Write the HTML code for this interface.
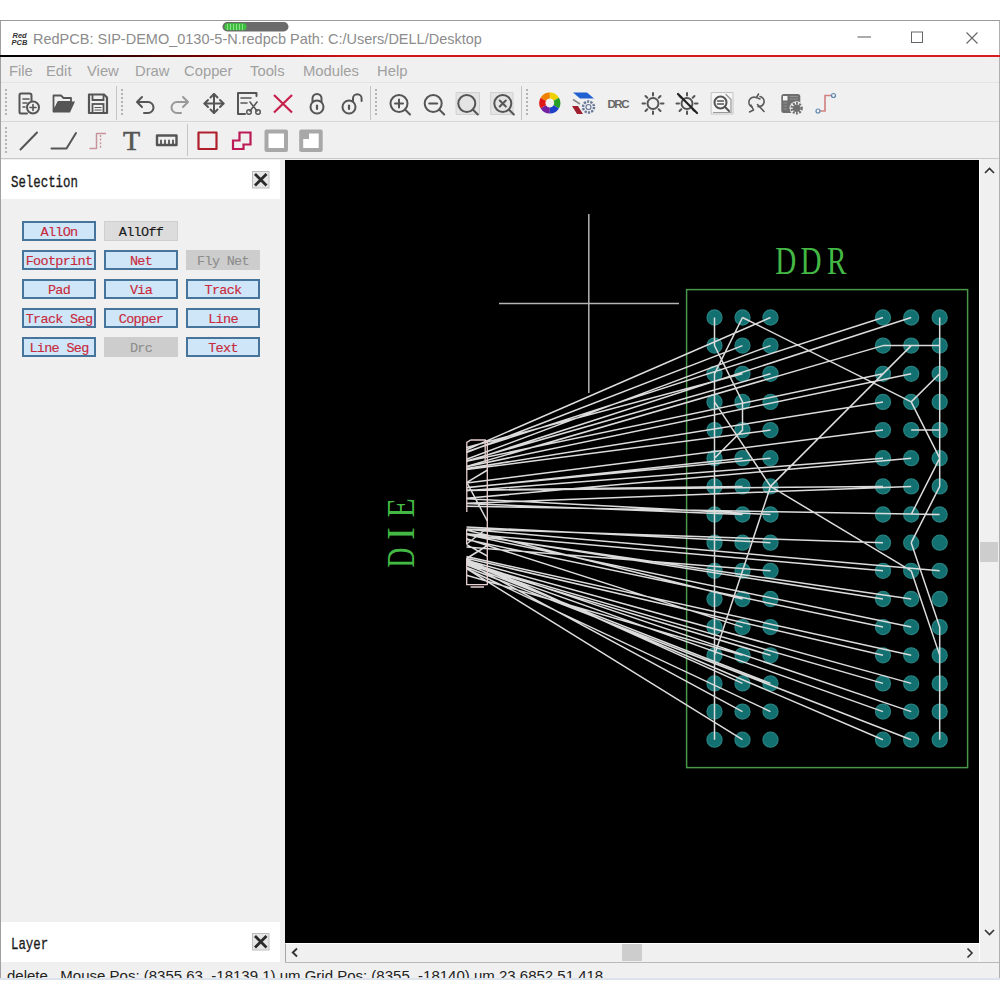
<!DOCTYPE html>
<html><head><meta charset="utf-8">
<style>
*{margin:0;padding:0;box-sizing:border-box}
html,body{width:1000px;height:1000px;overflow:hidden;background:#fff;font-family:"Liberation Sans",sans-serif}
div{position:absolute}
#win{left:0;top:20px;width:1000px;height:959px;background:#f0f0f0;border-top:1px solid #9a9a9a;border-left:1px solid #a0a0a0;border-right:1px solid #b0b0b0}
#title{left:1px;top:21px;width:998px;height:34px;background:#fff}
#redline{left:0;top:55px;width:1000px;height:2px;background:linear-gradient(90deg,#000 0%,#200 10%,#900 25%,#d0141c 35%,#d81c24 100%)}
.ttxt{left:33px;top:30.5px;font-size:14.5px;color:#8c8c8c;white-space:nowrap}
.mi{top:63px;font-size:14.8px;color:#a0a0a0}
.hl{height:1px;background:#dcdcdc}
.sep{width:1px;background:#c4c4c4}
.grip{width:2px;background-image:linear-gradient(#b4b4b4 50%,transparent 50%);background-size:2px 4px}
.btn{height:20px;width:74px;border:2px solid #46749a;background:#cfe6f9;color:#c82a3c;font-family:"Liberation Mono",monospace;-webkit-text-stroke:0.15px;font-size:13.5px;text-align:center;line-height:19px;letter-spacing:-0.7px;white-space:nowrap}
.btn.g{border:1px solid #cfcfcf;background:#dcdcdc;color:#1a1a1a;line-height:21px}
.btn.d{border:1px solid #cdcdcd;background:#cdcdcd;color:#8e8e8e;line-height:21px}
#canvas{left:285px;top:160px;width:694px;height:783px;background:#000}
svg{position:absolute;overflow:visible}
.ic{stroke:#555;fill:none;stroke-width:2}
</style></head><body>
<div id="win"></div>
<div id="title"></div>
<div id="redline"></div>
<div class="ttxt">RedPCB: SIP-DEMO_0130-5-N.redpcb Path: C:/Users/DELL/Desktop</div>
<div class="mi" style="left:9px">File</div>
<div class="mi" style="left:46px">Edit</div>
<div class="mi" style="left:87px">View</div>
<div class="mi" style="left:135px">Draw</div>
<div class="mi" style="left:184px">Copper</div>
<div class="mi" style="left:250px">Tools</div>
<div class="mi" style="left:303px">Modules</div>
<div class="mi" style="left:377px">Help</div>
<div class="hl" style="left:1px;top:82px;width:998px;background:#e4e4e4"></div>
<div class="hl" style="left:1px;top:121px;width:998px;background:#d8d8d8"></div>
<div class="hl" style="left:1px;top:158px;width:998px;background:#c8c8c8"></div>
<div class="grip" style="left:5px;top:89px;height:28px"></div>
<div class="sep" style="left:116px;top:86px;height:34px"></div>
<div class="grip" style="left:121px;top:89px;height:28px"></div>
<div class="sep" style="left:370px;top:86px;height:34px"></div>
<div class="grip" style="left:375px;top:89px;height:28px"></div>
<div class="sep" style="left:521px;top:86px;height:34px"></div>
<div class="grip" style="left:526px;top:89px;height:28px"></div>
<div class="grip" style="left:5px;top:127px;height:28px"></div>
<div class="sep" style="left:187px;top:124px;height:32px"></div>

<!-- PANEL -->
<div style="left:1px;top:160px;width:279px;height:39px;background:#fff"></div>
<div style="left:11px;top:174px;font-family:'Liberation Mono',monospace;font-size:12.4px;letter-spacing:0px;color:#1a1a1a;-webkit-text-stroke:0.25px;transform:scaleY(1.3);transform-origin:0 0">Selection</div>
<div style="left:1px;top:922px;width:279px;height:40px;background:#fff"></div>
<div style="left:11px;top:936px;font-family:'Liberation Mono',monospace;font-size:12.4px;letter-spacing:0px;color:#1a1a1a;-webkit-text-stroke:0.25px;transform:scaleY(1.3);transform-origin:0 0">Layer</div>

<div class="btn" style="left:22px;top:221px">AllOn</div>
<div class="btn g" style="left:104px;top:221px">AllOff</div>
<div class="btn" style="left:22px;top:250px">Footprint</div>
<div class="btn" style="left:104px;top:250px">Net</div>
<div class="btn d" style="left:186px;top:250px">Fly Net</div>
<div class="btn" style="left:22px;top:279px">Pad</div>
<div class="btn" style="left:104px;top:279px">Via</div>
<div class="btn" style="left:186px;top:279px">Track</div>
<div class="btn" style="left:22px;top:308px">Track Seg</div>
<div class="btn" style="left:104px;top:308px">Copper</div>
<div class="btn" style="left:186px;top:308px">Line</div>
<div class="btn" style="left:22px;top:337px">Line Seg</div>
<div class="btn d" style="left:104px;top:337px">Drc</div>
<div class="btn" style="left:186px;top:337px">Text</div>

<div id="canvas">
<svg width="694" height="783" viewBox="285 160 694 783" style="left:0;top:0">
<g stroke="#b4b4b4" stroke-width="1.5"><line x1="588.8" y1="214" x2="588.8" y2="393"/><line x1="499" y1="303.6" x2="679" y2="303.6"/></g>
<rect x="686.6" y="289.6" width="281" height="478" fill="none" stroke="#4a964a" stroke-width="1.5"/>
<g fill="#137070" stroke="#267f7e" stroke-width="1.3"><circle cx="714.5" cy="317.5" r="7.5"/><circle cx="742.5" cy="317.5" r="7.5"/><circle cx="770.5" cy="317.5" r="7.5"/><circle cx="883.0" cy="317.5" r="7.5"/><circle cx="911.2" cy="317.5" r="7.5"/><circle cx="939.7" cy="317.5" r="7.5"/><circle cx="714.5" cy="345.6" r="7.5"/><circle cx="742.5" cy="345.6" r="7.5"/><circle cx="770.5" cy="345.6" r="7.5"/><circle cx="883.0" cy="345.6" r="7.5"/><circle cx="911.2" cy="345.6" r="7.5"/><circle cx="939.7" cy="345.6" r="7.5"/><circle cx="714.5" cy="373.8" r="7.5"/><circle cx="742.5" cy="373.8" r="7.5"/><circle cx="770.5" cy="373.8" r="7.5"/><circle cx="883.0" cy="373.8" r="7.5"/><circle cx="911.2" cy="373.8" r="7.5"/><circle cx="939.7" cy="373.8" r="7.5"/><circle cx="714.5" cy="401.9" r="7.5"/><circle cx="742.5" cy="401.9" r="7.5"/><circle cx="770.5" cy="401.9" r="7.5"/><circle cx="883.0" cy="401.9" r="7.5"/><circle cx="911.2" cy="401.9" r="7.5"/><circle cx="939.7" cy="401.9" r="7.5"/><circle cx="714.5" cy="430.1" r="7.5"/><circle cx="742.5" cy="430.1" r="7.5"/><circle cx="770.5" cy="430.1" r="7.5"/><circle cx="883.0" cy="430.1" r="7.5"/><circle cx="911.2" cy="430.1" r="7.5"/><circle cx="939.7" cy="430.1" r="7.5"/><circle cx="714.5" cy="458.2" r="7.5"/><circle cx="742.5" cy="458.2" r="7.5"/><circle cx="770.5" cy="458.2" r="7.5"/><circle cx="883.0" cy="458.2" r="7.5"/><circle cx="911.2" cy="458.2" r="7.5"/><circle cx="939.7" cy="458.2" r="7.5"/><circle cx="714.5" cy="486.4" r="7.5"/><circle cx="742.5" cy="486.4" r="7.5"/><circle cx="770.5" cy="486.4" r="7.5"/><circle cx="883.0" cy="486.4" r="7.5"/><circle cx="911.2" cy="486.4" r="7.5"/><circle cx="939.7" cy="486.4" r="7.5"/><circle cx="714.5" cy="514.5" r="7.5"/><circle cx="742.5" cy="514.5" r="7.5"/><circle cx="770.5" cy="514.5" r="7.5"/><circle cx="883.0" cy="514.5" r="7.5"/><circle cx="911.2" cy="514.5" r="7.5"/><circle cx="939.7" cy="514.5" r="7.5"/><circle cx="714.5" cy="542.7" r="7.5"/><circle cx="742.5" cy="542.7" r="7.5"/><circle cx="770.5" cy="542.7" r="7.5"/><circle cx="883.0" cy="542.7" r="7.5"/><circle cx="911.2" cy="542.7" r="7.5"/><circle cx="939.7" cy="542.7" r="7.5"/><circle cx="714.5" cy="570.8" r="7.5"/><circle cx="742.5" cy="570.8" r="7.5"/><circle cx="770.5" cy="570.8" r="7.5"/><circle cx="883.0" cy="570.8" r="7.5"/><circle cx="911.2" cy="570.8" r="7.5"/><circle cx="939.7" cy="570.8" r="7.5"/><circle cx="714.5" cy="599.0" r="7.5"/><circle cx="742.5" cy="599.0" r="7.5"/><circle cx="770.5" cy="599.0" r="7.5"/><circle cx="883.0" cy="599.0" r="7.5"/><circle cx="911.2" cy="599.0" r="7.5"/><circle cx="939.7" cy="599.0" r="7.5"/><circle cx="714.5" cy="627.1" r="7.5"/><circle cx="742.5" cy="627.1" r="7.5"/><circle cx="770.5" cy="627.1" r="7.5"/><circle cx="883.0" cy="627.1" r="7.5"/><circle cx="911.2" cy="627.1" r="7.5"/><circle cx="939.7" cy="627.1" r="7.5"/><circle cx="714.5" cy="655.3" r="7.5"/><circle cx="742.5" cy="655.3" r="7.5"/><circle cx="770.5" cy="655.3" r="7.5"/><circle cx="883.0" cy="655.3" r="7.5"/><circle cx="911.2" cy="655.3" r="7.5"/><circle cx="939.7" cy="655.3" r="7.5"/><circle cx="714.5" cy="683.4" r="7.5"/><circle cx="742.5" cy="683.4" r="7.5"/><circle cx="770.5" cy="683.4" r="7.5"/><circle cx="883.0" cy="683.4" r="7.5"/><circle cx="911.2" cy="683.4" r="7.5"/><circle cx="939.7" cy="683.4" r="7.5"/><circle cx="714.5" cy="711.6" r="7.5"/><circle cx="742.5" cy="711.6" r="7.5"/><circle cx="770.5" cy="711.6" r="7.5"/><circle cx="883.0" cy="711.6" r="7.5"/><circle cx="911.2" cy="711.6" r="7.5"/><circle cx="939.7" cy="711.6" r="7.5"/><circle cx="714.5" cy="739.7" r="7.5"/><circle cx="742.5" cy="739.7" r="7.5"/><circle cx="770.5" cy="739.7" r="7.5"/><circle cx="883.0" cy="739.7" r="7.5"/><circle cx="911.2" cy="739.7" r="7.5"/><circle cx="939.7" cy="739.7" r="7.5"/></g>
<g fill="#44b844" font-family="Liberation Serif" font-size="40.5">
<text text-anchor="middle" transform="translate(785.8,274) scale(0.72,1)" x="0" y="0">D</text>
<text text-anchor="middle" transform="translate(810.9,274) scale(0.72,1)" x="0" y="0">D</text>
<text text-anchor="middle" transform="translate(836.8,274) scale(0.72,1)" x="0" y="0">R</text>
</g>
<g fill="#44b844" font-family="Liberation Serif" font-size="40.5" transform="translate(414,567) rotate(-90)">
<text text-anchor="middle" transform="translate(9.5,0) scale(0.68,1)">D</text>
<text text-anchor="middle" transform="translate(33.5,0) scale(0.95,1)">I</text>
<text text-anchor="middle" transform="translate(59.1,0) scale(0.78,1)">E</text>
</g>
<path fill="none" stroke="#dcdcdc" stroke-width="1.5" d="M466.5 451.6L883.0 317.5M466.5 461.6L911.2 317.5M466.5 466.4L883.0 345.6M466.5 466.7L911.2 373.8M466.5 461.3L883.0 373.8M466.5 468.6L883.0 401.9M466.5 483.0L883.0 430.1M466.5 490.7L883.0 458.2M466.5 498.3L911.2 458.2M466.5 490.5L883.0 486.4M466.5 503.3L911.2 486.4M466.5 506.2L939.7 514.5M466.5 528.9L883.0 542.7M466.5 533.8L883.0 570.8M466.5 529.2L939.7 570.8M466.5 534.0L883.0 599.0M466.5 534.5L911.2 599.0M466.5 539.6L883.0 627.1M466.5 534.6L911.2 627.1M466.5 558.2L883.0 655.3M466.5 556.5L911.2 655.3M466.5 563.0L883.0 683.4M466.5 560.2L911.2 683.4M466.5 563.3L883.0 711.6M466.5 561.2L911.2 711.6M466.5 561.9L883.0 739.7M466.5 567.2L911.2 739.7M466.5 449.7L770.5 317.5M466.5 452.5L742.5 345.6M466.5 459.3L770.5 345.6M466.5 461.0L770.5 373.8M466.5 447.5L742.5 373.8M466.5 469.6L770.5 430.1M466.5 487.8L742.5 458.2M466.5 487.4L770.5 458.2M466.5 490.0L742.5 486.4M466.5 503.5L742.5 514.5M466.5 498.7L770.5 514.5M466.5 526.9L770.5 542.7M466.5 547.1L770.5 570.8M466.5 530.0L742.5 599.0M466.5 538.8L742.5 627.1M466.5 564.1L770.5 655.3M466.5 575.2L742.5 655.3M466.5 559.2L742.5 683.4M466.5 564.8L770.5 683.4M466.5 562.5L742.5 711.6M466.5 568.7L770.5 711.6M466.5 568.6L742.5 739.7M714.5 317.5L714.5 345.6L742.5 401.9L742.5 430.1L714.5 458.2M742.5 317.5L714.5 373.8L714.5 739.7M714.5 401.9L770.5 486.4M770.5 486.4L911.2 345.6M770.5 486.4L911.2 570.8M770.5 486.4L714.5 655.3M742.5 317.5L911.2 401.9M883.0 345.6L939.7 345.6M939.7 317.5L939.7 486.4M911.2 401.9L939.7 373.8M911.2 401.9L939.7 458.2M911.2 430.1L939.7 430.1M939.7 458.2L911.2 514.5M939.7 486.4L911.2 542.7M911.2 542.7L939.7 627.1L939.7 655.3M911.2 570.8L939.7 655.3L939.7 739.7M466.5 482.7L487.5 470M466.8 482.4L487.3 521M466.6 544.6L487.3 556M466.5 544L487.5 528M466.5 558.5L487.5 545.5"/>
<path fill="none" stroke="#e8d0d0" stroke-width="1.3" d="M466.8 512V442.4L470.8 440H485.2L487.3 442V584.7H466.7V558.3 M466.7 528.9V544.6 M485.2 440V462 M470.6 587H484"/>
</svg>
</div>
<!-- scrollbars -->
<div style="left:979px;top:159px;width:20px;height:803px;background:#f0f0f0;border-left:1px solid #fff"></div>
<div style="left:980px;top:542px;width:18px;height:20px;background:#cdcdcd"></div>
<div style="left:285px;top:943px;width:694px;height:19px;background:#f0f0f0;border-left:1px solid #a8a8a8;border-top:1px solid #fff"></div>
<div style="left:622px;top:944px;width:20px;height:17px;background:#cdcdcd"></div>
<div class="hl" style="left:285px;top:962px;width:714px;background:#b8b8b8"></div>
<div style="left:7px;top:964px;width:990px;height:14px;overflow:hidden">
<div style="left:0;top:3px;font-size:15px;color:#222;white-space:nowrap">delete &nbsp; Mouse Pos: (8355.63, -18139.1) um Grid Pos: (8355, -18140) um 23.6852 51.418</div>
</div>
<div style="left:0;top:978px;width:1000px;height:2px;background:#dde3ea"></div>
<div style="left:0;top:980px;width:1000px;height:20px;background:#fff"></div>
<svg style="left:0;top:84px" width="1000" height="76" viewBox="0 84 1000 76">
<g fill="none" stroke="#555" stroke-width="2" stroke-linecap="round" stroke-linejoin="round">
 <!-- new doc -->
 <path d="M31.5 101V95.5Q31.5 93.5 29.5 93.5H21Q19.5 93.5 19.5 95V112Q19.5 113.5 21 113.5H27"/>
 <path d="M23 99H29M23 103H27M23 107H25" stroke-width="1.6"/>
 <circle cx="33" cy="107.5" r="6"/>
 <path d="M33 104.5V110.5M30 107.5H36" stroke-width="1.6"/>
 <!-- undo -->
 <path d="M138 102H148A5.5 5.5 0 0 1 148 113H144"/>
 <path d="M142 97L137 102L142 107"/>
 <!-- redo light -->
 <path d="M187 102H177A5.5 5.5 0 0 0 177 113H181" stroke="#999"/>
 <path d="M183 97L188 102L183 107" stroke="#999"/>
 <!-- move -->
 <path d="M214 94V113M204.5 103.5H223.5"/>
 <path d="M210.5 97.5L214 94L217.5 97.5M210.5 109.5L214 113L217.5 109.5M208 100L204.5 103.5L208 107M220 100L223.5 103.5L220 107"/>
 <!-- cut doc -->
 <path d="M256.5 96V93H238V114H245"/>
 <path d="M241 98H251M241 103H247" stroke-width="1.6"/>
 <path d="M250 102L257 111M257 102L250 111" stroke-width="1.6"/>
 <circle cx="249" cy="112" r="2.3" stroke-width="1.4"/><circle cx="258" cy="112" r="2.3" stroke-width="1.4"/>
 <!-- lock -->
 <circle cx="317" cy="107" r="6.5"/>
 <path d="M312.5 102V98.5A4.5 4.5 0 0 1 321.5 98.5V102"/>
 <path d="M317 105.5V109" stroke-width="2.2"/>
 <!-- unlock -->
 <circle cx="349" cy="107" r="6.5"/>
 <path d="M353 101V98.5A4.3 4.3 0 0 1 361.6 98.5V101"/>
 <path d="M349 105.5V109" stroke-width="2.2"/>
 <!-- zoom in -->
 <circle cx="399" cy="103.5" r="8.5"/><path d="M405 109.5L410 114.5M395 103.5H403M399 99.5V107.5"/>
 <circle cx="433.2" cy="103.5" r="8.5"/><path d="M439.2 109.5L444.2 114.5M429.2 103.5H437.2"/>
 <rect x="456.5" y="92.5" width="23" height="22" fill="#e4e4e4" stroke="#d0d0d0" stroke-width="1"/>
 <circle cx="466.8" cy="103.5" r="8.5"/><path d="M472.8 109.5L477.8 114.5"/>
 <rect x="491" y="92.5" width="22" height="22" fill="#e4e4e4" stroke="#d0d0d0" stroke-width="1"/>
 <circle cx="502.8" cy="103.5" r="8.5"/><path d="M508.8 109.5L513.8 114.5M499.8 100.5L505.8 106.5M505.8 100.5L499.8 106.5"/>
 <!-- sun -->
 <circle cx="653" cy="103.5" r="5.5"/>
 <path d="M653 93V95.5M653 111.5V114M642.5 103.5H645M661 103.5H663.5M645.5 96L647.3 97.8M658.7 109.2L660.5 111M645.5 111L647.3 109.2M658.7 97.8L660.5 96"/>
 <!-- sun off -->
 <circle cx="687" cy="103.5" r="5.5"/>
 <path d="M687 93V95.5M687 111.5V114M676.5 103.5H679M695 103.5H697.5M679.5 96L681.3 97.8M692.7 109.2L694.5 111M679.5 111L681.3 109.2M692.7 97.8L694.5 96"/>
 <path d="M678 94L697 113" stroke="#222" stroke-width="2.2"/>
 <!-- doc search -->
 <rect x="711.5" y="92.5" width="21.5" height="21.5" fill="#f6f6f6" stroke="#c4c4c4" stroke-width="1"/>
 <path d="M726 94.5L731 99.5V112.5H713.5" stroke="#999" stroke-width="1.2"/>
 <circle cx="720.5" cy="102.5" r="6"/><path d="M724.8 106.8L729 111"/>
 <path d="M717.5 101H723.5M717.5 104H723.5" stroke-width="1.4"/>
 <!-- swap -->
 <g stroke="#5a5a5a" stroke-width="1.6">
 <path d="M756 97.5A4.8 4.8 0 1 0 752 107"/>
 <path d="M758 106.5A4.8 4.8 0 1 0 760 96.5"/>
 <path d="M758.5 94L756.5 97.5L760 99"/>
 <path d="M751 105L753.5 110L749.5 112"/>
 <path d="M757.5 104.5L764 111.5"/>
 </g>
 <!-- line icons row 2 -->
 <path d="M20.5 149.5L37 132.5"/>
 <path d="M51.5 148.5H66.5L76 133"/>
 <path d="M89.5 148.5H96.5V133.5H106" stroke="#c8949c" stroke-width="1.5" stroke-linecap="butt"/>
 <path d="M100.5 135V148.5" stroke="#c8949c" stroke-width="1.4" stroke-dasharray="2 1.6" stroke-linecap="butt"/>
 <rect x="157" y="135.5" width="19.5" height="9.5" stroke-width="2.4"/>
 <path d="M161 140.5V145M165 140.5V145M169 140.5V145M173 140.5V145" stroke-width="1.8"/>
 <rect x="198.5" y="132.5" width="18" height="16.5" stroke="#b0202c" stroke-width="2.2"/>
 <path d="M233 140.5H239.5V132.5H250.5V144.5H243.5V149H233Z" stroke="#bc1a56" stroke-width="2.2" stroke-linejoin="miter"/>
 <rect x="266.5" y="131.5" width="19.5" height="18.5" fill="#fff" stroke="#a8a8a8" stroke-width="4"/>
 <rect x="301.2" y="131.5" width="19.5" height="18.5" fill="#fff" stroke="#a8a8a8" stroke-width="4"/>
 <rect x="303" y="133" width="6" height="6" fill="#a8a8a8" stroke="none"/>
</g>
<!-- folder -->
<path d="M53.5 95.5H61L63.5 98H71V102H58.5L53.5 111.5Z" fill="none" stroke="#555" stroke-width="1.8" stroke-linejoin="round"/>
<path d="M57.5 101.5H75L70 112.5H53.5Z" fill="#555"/>
<!-- floppy -->
<path d="M89 94.5H104L107 97.5V113H89Z" fill="none" stroke="#555" stroke-width="2.2" stroke-linejoin="round"/>
<path d="M92.5 95V100H103.5V95" fill="none" stroke="#555" stroke-width="1.8"/>
<rect x="92.5" y="104" width="11" height="9" fill="none" stroke="#555" stroke-width="1.8"/>
<path d="M94.5 107.5H101.5M94.5 110H101.5" stroke="#555" stroke-width="1.2"/>
<!-- red X -->
<path d="M274 95L292 112.5M292 95L274 112.5" stroke="#c8204c" stroke-width="2.2"/>
<!-- color wheel -->
<g stroke-width="6.2" fill="none">
 <path d="M549.8 95.5A7.5 7.5 0 0 1 556.3 99.25" stroke="#f0d000"/>
 <path d="M556.3 99.25A7.5 7.5 0 0 1 556.3 106.75" stroke="#28a028"/>
 <path d="M556.3 106.75A7.5 7.5 0 0 1 549.8 110.5" stroke="#2040c8"/>
 <path d="M549.8 110.5A7.5 7.5 0 0 1 543.3 106.75" stroke="#7020a0"/>
 <path d="M543.3 106.75A7.5 7.5 0 0 1 543.3 99.25" stroke="#e01818"/>
 <path d="M543.3 99.25A7.5 7.5 0 0 1 549.8 95.5" stroke="#f08000"/>
</g>
<!-- layers icon -->
<path d="M573 92.5H587L594 98.5H580Z" fill="#2060d0"/>
<path d="M573 99.5L580 104" stroke="#888" stroke-width="1.5"/>
<path d="M572 106H578L583 114H577Z" fill="#a02030"/>
<circle cx="588.5" cy="107" r="5.5" fill="none" stroke="#6a7a9a" stroke-width="2.5" stroke-dasharray="2.2 1.2"/>
<circle cx="588.5" cy="107" r="2.5" fill="none" stroke="#6a7a9a" stroke-width="1.2"/>
<!-- DRC -->
<text x="607.5" y="108" font-family="Liberation Sans" font-weight="bold" font-size="11.5" fill="#666" textLength="22">DRC</text>
<!-- component gear -->
<rect x="781.3" y="94" width="19" height="19" rx="2.5" fill="#6e6e6e"/>
<rect x="783" y="96" width="4.5" height="4.5" fill="#f4f4f4"/>
<path d="M789.5 96.5H798M789.5 99H798M783.5 103H787M783.5 106H787M783.5 109H787" stroke="#9a9a9a" stroke-width="0.8"/>
<circle cx="796.6" cy="108.3" r="7" fill="#f0f0f0"/>
<circle cx="796.6" cy="108.3" r="3.8" fill="#6e6e6e"/>
<circle cx="796.6" cy="108.3" r="5" fill="none" stroke="#6e6e6e" stroke-width="2.4" stroke-dasharray="1.9 1.3"/>
<!-- route icon -->
<path d="M818 111H825V95.5H832" fill="none" stroke="#d08080" stroke-width="1.6"/>
<circle cx="818" cy="111" r="2" fill="#f0f0f0" stroke="#6088b0" stroke-width="1.2"/>
<circle cx="833.5" cy="95.5" r="2" fill="#f0f0f0" stroke="#6088b0" stroke-width="1.2"/>
<!-- T -->
<text x="123" y="150" font-family="Liberation Serif" font-size="28" fill="#555" stroke="#555" stroke-width="0.6">T</text>
</svg>
<!-- title bar icons -->
<svg style="left:0;top:20px" width="1000" height="40" viewBox="0 20 1000 40">
 <text x="12.5" y="37.5" font-family="Liberation Sans" font-weight="bold" font-style="italic" font-size="7.5" fill="#333">Red</text>
 <text x="11.5" y="44.5" font-family="Liberation Sans" font-weight="bold" font-style="italic" font-size="7.5" fill="#333">PCB</text>
 <rect x="222.5" y="22" width="66" height="9.5" rx="4.7" fill="#6a6a6a"/>
 <rect x="224.5" y="23.2" width="22" height="7" rx="3" fill="#3fbf3f"/>
 <path d="M227.5 24V30M230.5 24V30M233.5 24V30M236.5 24V30M239.5 24V30M242.5 24V30" stroke="#a0e8a0" stroke-width="0.8"/>
 <path d="M857.5 37H871" stroke="#666" stroke-width="1.1"/>
 <rect x="911.5" y="32" width="11" height="10.5" fill="none" stroke="#666" stroke-width="1"/>
 <path d="M966.5 32.5L977.5 43.5M977.5 32.5L966.5 43.5" stroke="#666" stroke-width="1.1"/>
</svg>
<!-- panel close buttons -->
<svg style="left:252px;top:171px" width="18" height="18" viewBox="0 0 18 18">
 <rect x="0.5" y="0.5" width="16.5" height="16.5" fill="#e6e6e6" stroke="#bdbdbd" stroke-width="1"/>
 <path d="M3 3L14.5 14.5M14.5 3L3 14.5" stroke="#2a2a2a" stroke-width="2.8"/>
</svg>
<svg style="left:252px;top:933px" width="18" height="18" viewBox="0 0 18 18">
 <rect x="0.5" y="0.5" width="16.5" height="16.5" fill="#e6e6e6" stroke="#bdbdbd" stroke-width="1"/>
 <path d="M3 3L14.5 14.5M14.5 3L3 14.5" stroke="#2a2a2a" stroke-width="2.8"/>
</svg>
<!-- scroll arrows -->
<svg style="left:0;top:0" width="1000" height="1000" viewBox="0 0 1000 1000">
 <g fill="none" stroke="#333" stroke-width="1.6">
 <path d="M985 173L989.5 168.5L994 173"/>
 <path d="M985 930L989.5 934.5L994 930"/>
 <path d="M297 948.5L292.8 952.5L297 956.5" stroke-width="1.9"/>
 <path d="M967.5 948.5L972 953L967.5 957.5"/>
 </g>
</svg>

</body></html>
